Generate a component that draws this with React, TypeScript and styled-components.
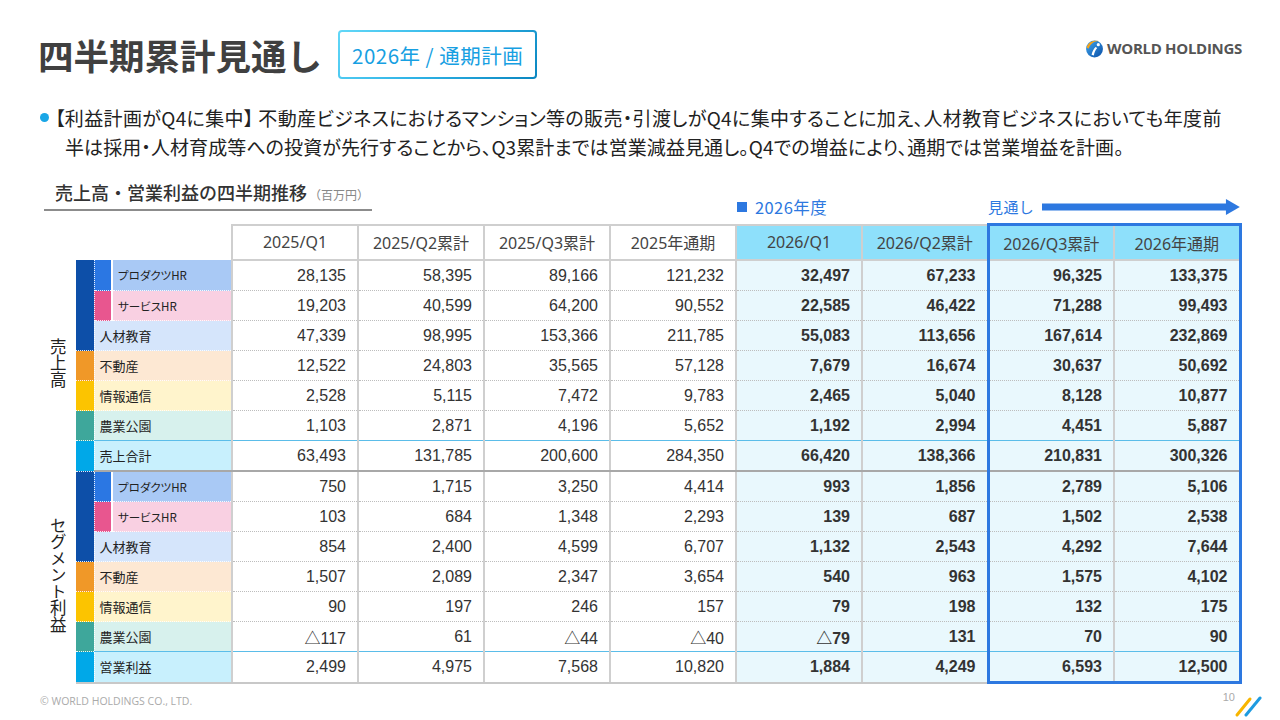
import React from 'react';
import styled, { createGlobalStyle, css } from 'styled-components';

const GlobalStyle = createGlobalStyle`
  html, body { margin: 0; padding: 0; background: #fff; }
  body { font-family: "Noto Sans CJK JP", "Noto Sans", sans-serif; color: #333; }
`;

const BLUE = '#2d78e0';
const GRID = '#cfcfcf';

const Page = styled.div`
  width: 1280px;
  height: 720px;
  box-sizing: border-box;
  padding: 30px 40px 0 40px;
  display: flex;
  flex-direction: column;
  overflow: hidden;
  & > * {
    flex-shrink: 0;
  }
`;

const Header = styled.header`
  display: flex;
  align-items: center;
  height: 49px;
`;

const Title = styled.h1`
  margin: 0 0 0 -2px;
  font-size: 35.5px;
  font-weight: 700;
  color: #404040;
  line-height: 1;
`;

const Badge = styled.div`
  margin-left: 16px;
  height: 49px;
  box-sizing: border-box;
  padding: 0 12px;
  display: flex;
  align-items: center;
  border: 2px solid transparent;
  border-radius: 4px;
  background: linear-gradient(#fff, #fff) padding-box,
    linear-gradient(135deg, #62d8f8 0%, #2fb3e6 50%, #0a86c0 100%) border-box;
  color: #17a0e2;
  font-size: 20.5px;
  letter-spacing: 0.5px;
  white-space: nowrap;
`;

const Logo = styled.div`
  margin-left: auto;
  margin-right: -2px;
  align-self: flex-start;
  margin-top: 8px;
  display: flex;
  align-items: center;
  gap: 3px;
  font-family: "Open Sans", "Noto Sans", sans-serif;
  font-weight: 700;
  font-size: 15px;
  color: #555;
  letter-spacing: -0.3px;
`;

const Bullet = styled.div`
  margin-top: 24px;
  display: flex;
  align-items: flex-start;
  gap: 6px;
`;

const Dot = styled.span`
  flex: none;
  width: 9px;
  height: 9px;
  border-radius: 50%;
  background: #19a6e6;
  margin-top: 10px;
`;

const BulletText = styled.p`
  margin: 0;
  font-size: 19px;
  line-height: 29px;
  color: #222;
  font-feature-settings: "palt";
  white-space: nowrap;
`;

const Line = styled.span<{ $indent?: number; $spacing: number }>`
  display: block;
  padding-left: ${(p) => p.$indent ?? 0}px;
  letter-spacing: ${(p) => p.$spacing}px;
`;

const CaptionRow = styled.div`
  margin-top: 18px;
  height: 44px;
  display: grid;
  grid-template-columns: 697px 251px 252px;
  align-items: end;
`;

const Heading = styled.div`
  margin-bottom: 13px;
  margin-left: 4px;
  width: 328px;
  box-sizing: border-box;
  padding: 0 0 1px 11px;
  border-bottom: 2px solid #8c8c8c;
  display: flex;
  align-items: baseline;
  gap: 2px;
  font-size: 18px;
  line-height: 26px;
  font-weight: 500;
  color: #333;
  white-space: nowrap;
`;

const Unit = styled.span`
  font-size: 12px;
  color: #888;
  font-weight: 400;
`;

const Legend = styled.div<{ $size: number }>`
  padding-bottom: 6px;
  display: flex;
  align-items: center;
  gap: 8px;
  font-size: ${(p) => p.$size}px;
  letter-spacing: 0.4px;
  line-height: 22px;
  color: ${BLUE};
  white-space: nowrap;
`;

const Square = styled.span`
  width: 10px;
  height: 10px;
  background: ${BLUE};
`;

const Arrow = styled.svg`
  flex: 1;
  height: 16px;
`;

const Table = styled.table`
  border-collapse: collapse;
  table-layout: fixed;
  width: 1200px;
`;

type Kind = 'normal' | 'end' | 'total' | 'last';
type Hl = 'left' | 'right' | undefined;

const bottomFor = (k: Kind) =>
  k === 'end'
    ? '1px solid #5bbde9'
    : k === 'total'
    ? '2px solid #a8a8a8'
    : k === 'last'
    ? '2px solid #c8c8c8'
    : '1px dotted #bdbdbd';

const EmptyHead = styled.th`
  padding: 0;
  border: none;
`;

const HeadCell = styled.th<{ $plan?: boolean; $hl?: Hl }>`
  height: 33px;
  padding: 0;
  font-family: "Noto Sans", "Noto Sans CJK JP", sans-serif;
  font-weight: 400;
  font-size: 16px;
  color: #444;
  background: ${(p) => (p.$plan ? '#8ee0fb' : '#fff')};
  border: 2px solid ${GRID};
  ${(p) =>
    p.$hl &&
    css`
      border-top: 3px solid ${BLUE};
    `}
  ${(p) =>
    p.$hl === 'left' &&
    css`
      border-left: 3px solid ${BLUE};
    `}
  ${(p) =>
    p.$hl === 'right' &&
    css`
      border-right: 3px solid ${BLUE};
    `}
`;

const SectionCell = styled.th`
  padding: 0;
  border: none;
  vertical-align: middle;
  text-align: center;
`;

const Vertical = styled.span`
  display: inline-block;
  writing-mode: vertical-rl;
  font-size: 16.5px;
  font-weight: 400;
  color: #222;
  line-height: 1;
`;

const GroupBar = styled.td<{ $color: string; $kind: Kind }>`
  padding: 0;
  background: ${(p) => p.$color};
  border-right: 1px dotted rgba(255, 255, 255, 0.9);
  border-bottom: ${(p) => (p.$kind === 'last' ? '2px solid #c8c8c8' : '1px dotted rgba(255,255,255,0.9)')};
`;

const SubBar = styled.td<{ $color: string }>`
  padding: 0;
  background: ${(p) => p.$color};
  border-right: 2px solid #fff;
  border-bottom: 1px dotted rgba(255, 255, 255, 0.9);
`;

const LabelCell = styled.td<{ $bg: string; $small?: boolean; $kind: Kind }>`
  height: 29px;
  padding: 0 0 0 5px;
  background: ${(p) => p.$bg};
  font-size: ${(p) => (p.$small ? '11.5px' : '13px')};
  font-feature-settings: "palt";
  color: #222;
  white-space: nowrap;
  border-right: 2px solid ${GRID};
  border-bottom: ${(p) => (p.$kind === 'normal' ? '1px dotted rgba(255,255,255,0.9)' : bottomFor(p.$kind))};
`;

const NumCell = styled.td<{ $plan?: boolean; $hl?: Hl; $kind: Kind }>`
  height: 29px;
  padding: 0 11px 0 0;
  text-align: right;
  font-family: "Liberation Sans", Arial, "Noto Sans CJK JP", sans-serif;
  font-size: 16px;
  color: #333;
  font-weight: ${(p) => (p.$plan ? 700 : 400)};
  background: ${(p) => (p.$plan ? '#e9f8fd' : '#fff')};
  border-right: 2px solid ${GRID};
  border-bottom: ${(p) => bottomFor(p.$kind)};
  ${(p) =>
    p.$hl === 'left' &&
    css`
      border-left: 3px solid ${BLUE};
    `}
  ${(p) =>
    p.$hl === 'right' &&
    css`
      border-right: 3px solid ${BLUE};
    `}
  ${(p) =>
    p.$hl &&
    p.$kind === 'last' &&
    css`
      border-bottom: 3px solid ${BLUE};
    `}
`;

const Footer = styled.footer`
  margin-top: auto;
  height: 40px;
  margin-right: -22px;
  display: flex;
  align-items: center;
  justify-content: space-between;
`;

const Copyright = styled.span`
  font-family: "Open Sans", "Noto Sans", sans-serif;
  font-size: 10.5px;
  color: #aaa;
  margin-top: -6px;
`;

const PageNo = styled.div`
  display: flex;
  align-items: flex-start;
  font-family: "Liberation Sans", Arial, sans-serif;
  font-size: 11px;
  color: #aaa;
  margin-top: 6px;
`;

const PageNum = styled.span`
  margin-top: -5px;
  margin-right: -1px;
`;

const HEAD = [
  '2025/Q1',
  '2025/Q2累計',
  '2025/Q3累計',
  '2025年通期',
  '2026/Q1',
  '2026/Q2累計',
  '2026/Q3累計',
  '2026年通期',
];

type Row = {
  label: string;
  bar: string;
  barSpan: number;
  sub?: string;
  bg: string;
  kind: Kind;
  values: string[];
};

const SEG = {
  hr: '#0d4fa8',
  prod: '#2b77e3',
  serv: '#e8568f',
  re: '#f09828',
  it: '#fcc400',
  ag: '#3ea79b',
  tot: '#00a8e8',
};

const makeRows = (v: string[][], totalLabel: string, last: boolean): Row[] => [
  { label: 'プロダクツHR', bar: SEG.hr, barSpan: 3, sub: SEG.prod, bg: '#a9c9f5', kind: 'normal', values: v[0] },
  { label: 'サービスHR', bar: SEG.hr, barSpan: 0, sub: SEG.serv, bg: '#f9d0e2', kind: 'normal', values: v[1] },
  { label: '人材教育', bar: SEG.hr, barSpan: 0, bg: '#d5e5fb', kind: 'normal', values: v[2] },
  { label: '不動産', bar: SEG.re, barSpan: 1, bg: '#fde8d3', kind: 'normal', values: v[3] },
  { label: '情報通信', bar: SEG.it, barSpan: 1, bg: '#fff4cc', kind: 'normal', values: v[4] },
  { label: '農業公園', bar: SEG.ag, barSpan: 1, bg: '#d7f1ed', kind: 'end', values: v[5] },
  { label: totalLabel, bar: SEG.tot, barSpan: 1, bg: '#c8f0fd', kind: last ? 'last' : 'total', values: v[6] },
];

const SALES = makeRows(
  [
    ['28,135', '58,395', '89,166', '121,232', '32,497', '67,233', '96,325', '133,375'],
    ['19,203', '40,599', '64,200', '90,552', '22,585', '46,422', '71,288', '99,493'],
    ['47,339', '98,995', '153,366', '211,785', '55,083', '113,656', '167,614', '232,869'],
    ['12,522', '24,803', '35,565', '57,128', '7,679', '16,674', '30,637', '50,692'],
    ['2,528', '5,115', '7,472', '9,783', '2,465', '5,040', '8,128', '10,877'],
    ['1,103', '2,871', '4,196', '5,652', '1,192', '2,994', '4,451', '5,887'],
    ['63,493', '131,785', '200,600', '284,350', '66,420', '138,366', '210,831', '300,326'],
  ],
  '売上合計',
  false
);

const PROFIT = makeRows(
  [
    ['750', '1,715', '3,250', '4,414', '993', '1,856', '2,789', '5,106'],
    ['103', '684', '1,348', '2,293', '139', '687', '1,502', '2,538'],
    ['854', '2,400', '4,599', '6,707', '1,132', '2,543', '4,292', '7,644'],
    ['1,507', '2,089', '2,347', '3,654', '540', '963', '1,575', '4,102'],
    ['90', '197', '246', '157', '79', '198', '132', '175'],
    ['△117', '61', '△44', '△40', '△79', '131', '70', '90'],
    ['2,499', '4,975', '7,568', '10,820', '1,884', '4,249', '6,593', '12,500'],
  ],
  '営業利益',
  true
);

const hlFor = (i: number): Hl => (i === 6 ? 'left' : i === 7 ? 'right' : undefined);

const LogoMark = () => (
  <svg width="19" height="19" viewBox="0 0 18 18">
    <defs>
      <linearGradient id="lg" x1="0" y1="0" x2="1" y2="1">
        <stop offset="0" stopColor="#3fa6ee" />
        <stop offset="1" stopColor="#0b4fa6" />
      </linearGradient>
    </defs>
    <circle cx="9" cy="9.5" r="8" fill="url(#lg)" />
    <path d="M1.6 8 C2.8 3 8 0.6 13 2 C8.8 2 5.2 4.6 3.4 9.2 Z" fill="#f6a21a" />
    <path d="M6.2 15 C6.8 12 8.2 9.4 10 7.6 L11.6 8.6 C10 10.4 8.8 12.8 8.4 15.6 Z" fill="#fff" />
    <circle cx="12.6" cy="5.4" r="1.5" fill="#fff" />
  </svg>
);

const Slashes = () => (
  <svg width="28" height="22" viewBox="0 0 28 22">
    <line x1="3" y1="19" x2="16" y2="3" stroke="#f7b500" strokeWidth="3" strokeLinecap="round" />
    <line x1="12" y1="19" x2="26" y2="2" stroke="#1e9be0" strokeWidth="3" strokeLinecap="round" />
  </svg>
);

const Section = ({ rows, title }: { rows: Row[]; title: string }) => (
  <>
    {rows.map((r, ri) => (
      <tr key={r.label}>
        {ri === 0 && (
          <SectionCell rowSpan={7}>
            <Vertical>{title}</Vertical>
          </SectionCell>
        )}
        {r.barSpan > 0 && <GroupBar rowSpan={r.barSpan} $color={r.bar} $kind={r.kind} />}
        {r.sub ? (
          <>
            <SubBar $color={r.sub} />
            <LabelCell $bg={r.bg} $small $kind={r.kind}>
              {r.label}
            </LabelCell>
          </>
        ) : (
          <LabelCell colSpan={2} $bg={r.bg} $kind={r.kind}>
            {r.label}
          </LabelCell>
        )}
        {r.values.map((v, i) => (
          <NumCell key={i} $plan={i >= 4} $hl={hlFor(i)} $kind={r.kind}>
            {v}
          </NumCell>
        ))}
      </tr>
    ))}
  </>
);

export default function App() {
  return (
    <>
      <GlobalStyle />
      <Page>
        <Header>
          <Title>四半期累計見通し</Title>
          <Badge>2026年 / 通期計画</Badge>
          <Logo>
            <LogoMark />
            <span>WORLD HOLDINGS</span>
          </Logo>
        </Header>

        <Bullet>
          <Dot />
          <BulletText>
            <Line $spacing={0.35}>
              【利益計画がQ4に集中】 不動産ビジネスにおけるマンション等の販売・引渡しがQ4に集中することに加え、人材教育ビジネスにおいても年度前
            </Line>
            <Line $indent={10} $spacing={0.08}>
              半は採用・人材育成等への投資が先行することから、Q3累計までは営業減益見通し。Q4での増益により、通期では営業増益を計画。
            </Line>
          </BulletText>
        </Bullet>

        <CaptionRow>
          <Heading>
            <span>売上高・営業利益の四半期推移</span>
            <Unit>（百万円）</Unit>
          </Heading>
          <Legend $size={16.5}>
            <Square />
            <span>2026年度</span>
          </Legend>
          <Legend $size={15}>
            <span>見通し</span>
            <Arrow viewBox="0 0 200 16" preserveAspectRatio="none">
              <rect x="0" y="4.5" width="188" height="7" fill={BLUE} />
              <polygon points="186,0 200,8 186,16" fill={BLUE} />
            </Arrow>
          </Legend>
        </CaptionRow>

        <Table>
          <colgroup>
            <col style={{ width: 36 }} />
            <col style={{ width: 18 }} />
            <col style={{ width: 18 }} />
            <col style={{ width: 120 }} />
            {HEAD.map((h) => (
              <col key={h} style={{ width: 126 }} />
            ))}
          </colgroup>
          <thead>
            <tr>
              <EmptyHead colSpan={4} />
              {HEAD.map((h, i) => (
                <HeadCell key={h} $plan={i >= 4} $hl={hlFor(i)}>
                  {h}
                </HeadCell>
              ))}
            </tr>
          </thead>
          <tbody>
            <Section rows={SALES} title="売上高" />
            <Section rows={PROFIT} title="セグメント利益" />
          </tbody>
        </Table>

        <Footer>
          <Copyright>© WORLD HOLDINGS CO., LTD.</Copyright>
          <PageNo>
            <PageNum>10</PageNum>
            <Slashes />
          </PageNo>
        </Footer>
      </Page>
    </>
  );
}
